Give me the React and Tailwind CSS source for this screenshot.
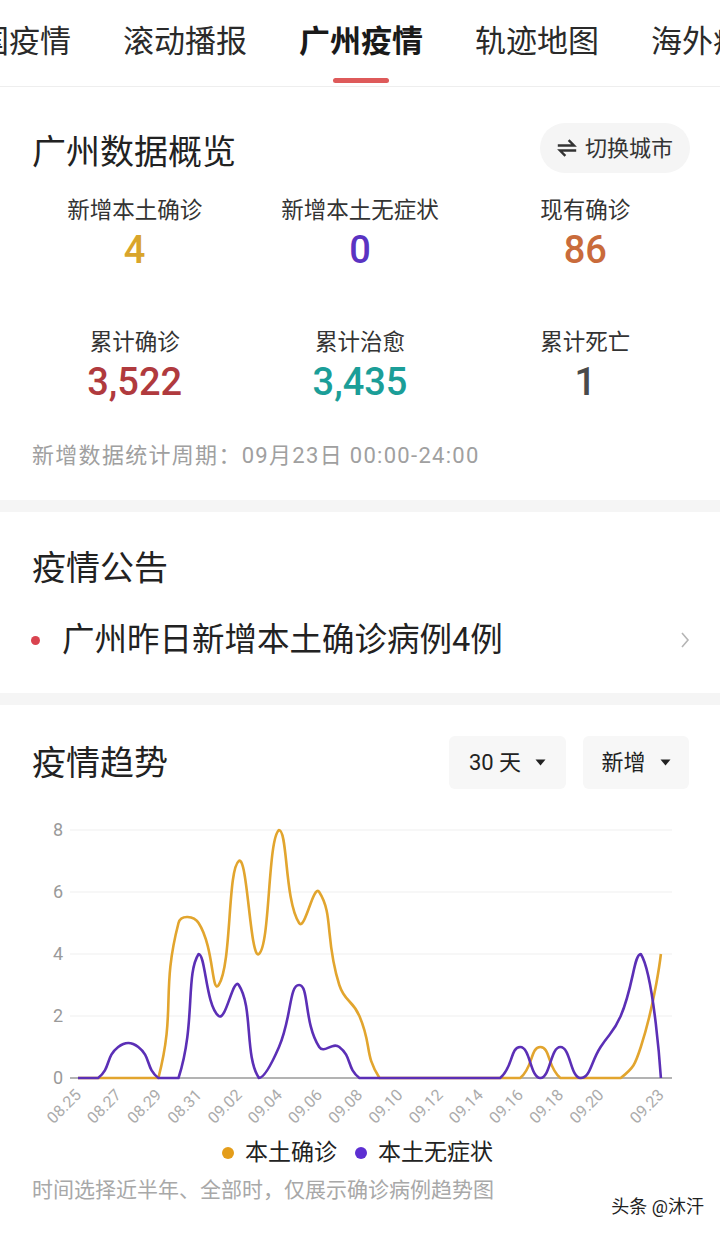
import React from 'react';

const tabs = ['全国疫情', '滚动播报', '广州疫情', '轨迹地图', '海外疫情'];

const stats = [
  { label: '新增本土确诊', value: '4', color: 'text-[#d9a52b]' },
  { label: '新增本土无症状', value: '0', color: 'text-[#5a33c2]' },
  { label: '现有确诊', value: '86', color: 'text-[#c96b3b]' },
  { label: '累计确诊', value: '3,522', color: 'text-[#b03a3e]' },
  { label: '累计治愈', value: '3,435', color: 'text-[#1b9e98]' },
  { label: '累计死亡', value: '1', color: 'text-[#4a4a4a]' },
];

// 08.25 - 09.23
const dates = Array.from({ length: 30 }, (_, i) => {
  const d = new Date(2022, 7, 25 + i);
  return String(d.getMonth() + 1).padStart(2, '0') + '.' + String(d.getDate()).padStart(2, '0');
});
const confirmed = [0, 0, 0, 0, 0, 5, 5, 3, 7, 4, 8, 5, 6, 3, 2, 0, 0, 0, 0, 0, 0, 0, 0, 1, 0, 0, 0, 0, 1, 4];
const asymptomatic = [0, 0, 1, 1, 0, 0, 4, 2, 3, 0, 1, 3, 1, 1, 0, 0, 0, 0, 0, 0, 0, 0, 1, 0, 1, 0, 1, 2, 4, 0];

const X0 = 78;
const STEP = 20.1;
const BASE = 278;
const UNIT = 31;

const xAt = (i) => X0 + i * STEP;
const yAt = (v) => BASE - v * UNIT;

// 和 echarts 的 smooth: true 差不多的贝塞尔平滑
function smoothPath(values) {
  const pts = values.map((v, i) => [xAt(i), yAt(v)]);
  const ys = pts.map((p) => p[1]);
  const minY = Math.min(...ys);
  const maxY = Math.max(...ys);
  const clamp = (y) => Math.min(maxY, Math.max(minY, y));
  const s = 0.5;
  const cps = pts.map((p, i) => {
    if (i === 0 || i === pts.length - 1) return [p, p];
    const prev = pts[i - 1];
    const next = pts[i + 1];
    const vx = next[0] - prev[0];
    const vy = next[1] - prev[1];
    const d0 = Math.hypot(p[0] - prev[0], p[1] - prev[1]);
    const d1 = Math.hypot(next[0] - p[0], next[1] - p[1]);
    const sum = d0 + d1 || 1;
    const r0 = d0 / sum;
    const r1 = d1 / sum;
    return [
      [p[0] - vx * s * r0, clamp(p[1] - vy * s * r0)],
      [p[0] + vx * s * r1, clamp(p[1] + vy * s * r1)],
    ];
  });
  let d = `M${pts[0][0]},${pts[0][1]}`;
  for (let i = 1; i < pts.length; i++) {
    const a = cps[i - 1][1];
    const b = cps[i][0];
    d += ` C${a[0].toFixed(1)},${a[1].toFixed(1)} ${b[0].toFixed(1)},${b[1].toFixed(1)} ${pts[i][0].toFixed(1)},${pts[i][1].toFixed(1)}`;
  }
  return d;
}

const labelIdx = [0, 2, 4, 6, 8, 10, 12, 14, 16, 18, 20, 22, 24, 26, 29];

function TrendChart() {
  return (
    <svg width="720" height="335" viewBox="0 0 720 335" className="block">
      {[0, 2, 4, 6, 8].map((v) => (
        <g key={v}>
          {v > 0 && <line x1="70" x2="672" y1={yAt(v)} y2={yAt(v)} stroke="#efefef" strokeWidth="1.2" />}
          <text x="63" y={yAt(v) + 6} textAnchor="end" fontSize="18" fill="#9a9a9a" fontFamily="Roboto, sans-serif">
            {v}
          </text>
        </g>
      ))}
      <line x1="70" x2="672" y1={BASE} y2={BASE} stroke="#9a9a9a" strokeWidth="1.5" />
      <path d={smoothPath(confirmed)} fill="none" stroke="#e2a52e" strokeWidth="2.6" strokeLinejoin="round" />
      <path d={smoothPath(asymptomatic)} fill="none" stroke="#5b2fb6" strokeWidth="2.6" strokeLinejoin="round" />
      {labelIdx.map((i) => (
        <text
          key={i}
          x={xAt(i) + 4}
          y="296"
          textAnchor="end"
          fontSize="16"
          fill="#ababab"
          fontFamily="Roboto, sans-serif"
          transform={`rotate(-45 ${xAt(i) + 4} 296)`}
        >
          {dates[i]}
        </text>
      ))}
    </svg>
  );
}

function SwapIcon() {
  return (
    <svg width="20" height="18" viewBox="0 0 20 18" fill="none" stroke="#333" strokeWidth="2.4" strokeLinecap="square">
      <path d="M2 6.5H17L12.5 2" />
      <path d="M18 11.5H3L7.5 16" />
    </svg>
  );
}

function Caret() {
  return (
    <svg width="11" height="7" viewBox="0 0 11 7">
      <path d="M0.5 0.5H10.5L5.5 6.5Z" fill="#222" />
    </svg>
  );
}

export default function App() {
  return (
    <div className="relative w-[720px] min-h-[1233px] bg-white text-[#333] font-[family-name:Roboto,'Noto_Sans_CJK_SC',sans-serif] overflow-hidden">
      {/* 顶部标签 */}
      <div className="h-[87px] border-b border-[#eeeeee] overflow-hidden">
        <div className="flex gap-[52px] -ml-[53px] whitespace-nowrap">
          {tabs.map((t) => {
            const active = t === '广州疫情';
            return (
              <div key={t} className="flex flex-col items-center pt-[27px] shrink-0">
                <span className={`text-[31px] leading-[30px] ${active ? 'font-bold text-[#1a1a1a]' : 'text-[#2a2a2a]'}`}>{t}</span>
                {active && <span className="mt-[21px] h-[5px] w-[56px] rounded-full bg-[#de5a5a]" />}
              </div>
            );
          })}
        </div>
      </div>

      {/* 数据概览 */}
      <section className="pb-[30px]">
        <div className="flex items-center justify-between pl-[32px] pr-[30px] pt-[36px]">
          <h2 className="mt-[8px] text-[34px] leading-[40px] text-[#222]">广州数据概览</h2>
          <button className="flex h-[50px] w-[150px] items-center justify-center gap-[8px] rounded-full bg-[#f5f5f5] text-[22px] text-[#333]">
            <SwapIcon />
            <span>切换城市</span>
          </button>
        </div>
        <div className="mt-[22px] grid grid-cols-3 gap-y-[57px] px-[22px]">
          {stats.map((s) => (
            <div key={s.label} className="flex flex-col items-center">
              <span className="text-[22.5px] leading-[30px] text-[#333]">{s.label}</span>
              <span className={`mt-[5px] text-[38px] leading-[40px] font-medium ${s.color}`}>{s.value}</span>
            </div>
          ))}
        </div>
        <p className="mt-[40px] pl-[32px] text-[22px] leading-[28px] tracking-[1.3px] text-[#a0a0a0]">新增数据统计周期：09月23日 00:00-24:00</p>
      </section>

      <div className="h-[12px] bg-[#f5f5f5]" />

      {/* 疫情公告 */}
      <section className="px-[32px] pt-[36px] pb-[33px]">
        <h2 className="text-[34px] leading-[40px] text-[#222]">疫情公告</h2>
        <div className="mt-[32px] flex items-center">
          <span className="-ml-[1px] h-[9px] w-[9px] rounded-full bg-[#d9434f]" />
          <span className="ml-[22px] text-[32.5px] leading-[40px] text-[#222]">广州昨日新增本土确诊病例4例</span>
          <svg className="ml-auto mr-[-2px]" width="10" height="18" viewBox="0 0 10 18" fill="none" stroke="#b5b5b5" strokeWidth="1.6">
            <path d="M2 2L8 9L2 16" />
          </svg>
        </div>
      </section>

      <div className="h-[12px] bg-[#f5f5f5]" />

      {/* 疫情趋势 */}
      <section className="pt-[31px]">
        <div className="flex items-center justify-between pl-[32px] pr-[31px]">
          <h2 className="text-[34px] leading-[40px] text-[#222]">疫情趋势</h2>
          <div className="flex gap-[17px]">
            <button className="flex h-[53px] w-[117px] items-center justify-center gap-[14px] rounded-[6px] bg-[#f7f7f7] text-[22px] text-[#222]">
              <span>30 天</span>
              <Caret />
            </button>
            <button className="flex h-[53px] w-[106px] items-center justify-center gap-[14px] rounded-[6px] bg-[#f7f7f7] text-[22px] text-[#222]">
              <span>新增</span>
              <Caret />
            </button>
          </div>
        </div>
        <div className="mt-[11px]">
          <TrendChart />
        </div>
        <div className="mt-[3px] flex items-center justify-center gap-[11px] pr-[5px] text-[23px] leading-[30px] text-[#222]">
          <span className="h-[12px] w-[12px] rounded-full bg-[#e49d1a]" />
          <span>本土确诊</span>
          <span className="ml-[7px] h-[12px] w-[12px] rounded-full bg-[#5d2fd2]" />
          <span>本土无症状</span>
        </div>
        <p className="mt-[8px] pl-[32px] text-[21px] leading-[28px] text-[#a8a8a8]">时间选择近半年、全部时，仅展示确诊病例趋势图</p>
      </section>

      <span className="absolute right-[16px] top-[1195px] text-[18px] leading-[24px] text-[#222] [text-shadow:0_0_2px_#fff,0_0_2px_#fff]">
        头条 @沐汗
      </span>
    </div>
  );
}
